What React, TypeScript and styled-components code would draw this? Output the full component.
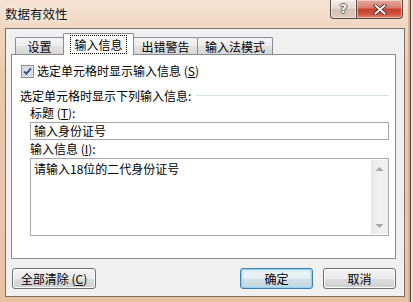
import React from "react";
import styled, { createGlobalStyle } from "styled-components";

const Global = createGlobalStyle`
  html, body { margin: 0; padding: 0; background: #ffffff; }
  body {
    font-family: "Noto Sans CJK SC", "Microsoft YaHei", sans-serif;
    font-size: 12px;
    color: #000;
  }
  * { box-sizing: border-box; }
`;

const Window = styled.div`
  width: 413px;
  height: 302px;
  display: flex;
  flex-direction: column;
  padding: 0 6px 5px 5px;
  border-right: 2px solid #e4e4e4;
  background: linear-gradient(180deg, #f5e2d2 0px, #f0d7c2 26px, #eacaac 70px, #e7c3a2 100%);
  box-shadow: inset -1px 0 0 #4e4038, inset -3px 0 0 #d9b293;
`;

const TitleBar = styled.div`
  height: 29px;
  display: flex;
  align-items: flex-start;
`;

const Title = styled.div`
  margin-top: 6px;
  font-size: 12.5px;
  line-height: 16px;
  color: #111;
  text-shadow: 0 0 5px #fff8f0, 0 0 8px #fff8f0;
`;

const CaptionButtons = styled.div`
  margin-left: auto;
  margin-right: 2px;
  display: flex;
`;

const CaptionButton = styled.div<{ $close?: boolean }>`
  width: ${(p) => (p.$close ? 46 : 27)}px;
  height: 19px;
  display: flex;
  align-items: center;
  justify-content: center;
  border: 1px solid #5e4a40;
  border-top: none;
  border-left: ${(p) => (p.$close ? "none" : "1px solid #5e4a40")};
  border-radius: ${(p) => (p.$close ? "0 0 4px 0" : "0 0 0 4px")};
  background: ${(p) =>
    p.$close
      ? "linear-gradient(180deg, #e7a79c 0%, #d98476 40%, #c8432f 52%, #cf5340 78%, #e1866c 100%)"
      : "linear-gradient(180deg, #f3ebe5 0%, #e6d9d0 45%, #d6c2b6 52%, #dccbc0 100%)"};
  box-shadow: inset 0 0 0 1px rgba(255, 255, 255, 0.45);
`;

const HelpGlyph = styled.span`
  font-family: "DejaVu Sans", sans-serif;
  font-weight: bold;
  font-size: 13px;
  line-height: 14px;
  color: #f2f2f2;
  text-shadow: -1px 0 #6a6a6a, 1px 0 #6a6a6a, 0 -1px #6a6a6a, 0 1px #6a6a6a;
`;

const Client = styled.div`
  flex: 1;
  display: flex;
  flex-direction: column;
  background: #f0f0f0;
  border: 1px solid #7c716a;
  padding: 4px 8px 7px 5px;
`;

const TabStrip = styled.div`
  position: relative;
  z-index: 1;
  height: 22px;
  margin-bottom: -1px;
  display: flex;
  align-items: flex-end;
  padding-left: 4px;
`;

const Tab = styled.div<{ $w: number; $active?: boolean }>`
  position: relative;
  z-index: ${(p) => (p.$active ? 2 : 1)};
  width: ${(p) => p.$w}px;
  height: ${(p) => (p.$active ? 22 : 17)}px;
  margin-left: -1px;
  margin-bottom: ${(p) => (p.$active ? 0 : 1)}px;
  border: 1px solid #898c95;
  border-bottom: none;
  border-radius: 2px 2px 0 0;
  display: flex;
  justify-content: center;
  align-items: ${(p) => (p.$active ? "flex-start" : "center")};
  padding-top: ${(p) => (p.$active ? 1 : 0)}px;
  font-size: 12px;
  line-height: 15px;
  background: ${(p) =>
    p.$active
      ? "#ffffff"
      : "linear-gradient(180deg, #f4f4f4 0%, #ececec 50%, #e1e1e1 51%, #d8d8d8 100%)"};
  &:first-child { margin-left: 0; }
`;

const FocusLabel = styled.span`
  border: 1px dotted #000;
  padding: 1px 3px 0;
  line-height: 16px;
`;

const Panel = styled.div`
  height: 205px;
  background: #ffffff;
  border: 1px solid #898c95;
  display: flex;
  flex-direction: column;
  padding-top: 8px;
`;

const CheckRow = styled.div`
  display: flex;
  align-items: center;
  height: 16px;
  margin-left: 9px;
  gap: 3px;
  line-height: 16px;
`;

const GroupRow = styled.div`
  display: flex;
  align-items: center;
  margin: 9px 6px 0 8px;
  height: 16px;
  line-height: 16px;
`;

const GroupLine = styled.div`
  flex: 1;
  height: 2px;
  margin-left: 5px;
  border-top: 1px solid #d5dfe5;
  border-bottom: 1px solid #ffffff;
`;

const FieldLabel = styled.div`
  margin: 1px 0 0 18px;
  height: 16px;
  line-height: 16px;
`;

const TextBox = styled.div`
  margin: 1px 0 0 18px;
  width: 359px;
  height: 18px;
  border: 1px solid #a5a7ad;
  padding-left: 3px;
  line-height: 16px;
  background: #fff;
`;

const TextArea = styled.div`
  margin: 1px 0 0 18px;
  width: 359px;
  height: 78px;
  border: 1px solid #a5a7ad;
  display: flex;
  background: #fff;
`;

const AreaText = styled.div`
  flex: 1;
  padding: 2px 0 0 3px;
  line-height: 16px;
`;

const ScrollBar = styled.div`
  width: 17px;
  margin: 1px 0 1px 0;
  display: flex;
  flex-direction: column;
  justify-content: space-between;
  background: linear-gradient(90deg, #e6e6e6 0%, #efefef 40%, #f1f1f1 100%);
`;

const ScrollArrow = styled.div`
  height: 17px;
  display: flex;
  align-items: center;
  justify-content: center;
`;

const ButtonRow = styled.div`
  margin-top: 9px;
  display: flex;
  gap: 10px;
`;

const Button = styled.div<{ $w: number; $default?: boolean }>`
  width: ${(p) => p.$w}px;
  height: 21px;
  display: flex;
  align-items: center;
  justify-content: center;
  line-height: 16px;
  padding-top: 1px;
  border-radius: 3px;
  border: 1px solid ${(p) => (p.$default ? "#3c7fb1" : "#707070")};
  background: ${(p) =>
    p.$default
      ? "linear-gradient(180deg, #eef5f9 0%, #e4eef4 50%, #d2dfe7 51%, #c6d5de 100%)"
      : "linear-gradient(180deg, #f2f2f2 0%, #ebebeb 50%, #dddddd 51%, #cfcfcf 100%)"};
  box-shadow: ${(p) =>
    p.$default
      ? "inset 0 0 0 1px #94d2f4, inset 0 0 2px 2px rgba(160, 220, 250, 0.5)"
      : "inset 0 0 0 1px #fbfbfb"};
  &:first-child { margin-left: 1px; margin-right: auto; }
`;

const CheckBox = () => (
  <svg width="13" height="13" viewBox="0 0 13 13">
    <rect x="0.5" y="0.5" width="12" height="12" fill="#f4f4f4" stroke="#8e8f8f" />
    <rect x="2" y="2" width="9" height="9" fill="#dfe3ea" stroke="#b3b7bf" strokeWidth="0.6" />
    <path d="M3.2 6.4 L5.3 8.8 L9.8 3.3" fill="none" stroke="#2f4a8a" strokeWidth="1.9" />
  </svg>
);

const CloseIcon = () => (
  <svg width="14" height="11" viewBox="0 0 14 11">
    <path d="M2.5 1.5 L11.5 9.5 M11.5 1.5 L2.5 9.5" stroke="#4a2a26" strokeWidth="3.6" strokeLinecap="square" />
    <path d="M2.5 1.5 L11.5 9.5 M11.5 1.5 L2.5 9.5" stroke="#ffffff" strokeWidth="1.9" strokeLinecap="square" />
  </svg>
);

const Arrow = ({ up }: { up?: boolean }) => (
  <svg width="9" height="6" viewBox="0 0 9 6">
    <path d={up ? "M0.5 5 L4.5 1 L8.5 5 Z" : "M0.5 1 L4.5 5 L8.5 1 Z"} fill="#a6a6a6" />
  </svg>
);

export default function App() {
  return (
    <>
      <Global />
      <Window>
        <TitleBar>
          <Title>数据有效性</Title>
          <CaptionButtons>
            <CaptionButton>
              <HelpGlyph>?</HelpGlyph>
            </CaptionButton>
            <CaptionButton $close>
              <CloseIcon />
            </CaptionButton>
          </CaptionButtons>
        </TitleBar>
        <Client>
          <TabStrip>
            <Tab $w={49}>设置</Tab>
            <Tab $w={71} $active>
              <FocusLabel>输入信息</FocusLabel>
            </Tab>
            <Tab $w={65}>出错警告</Tab>
            <Tab $w={76}>输入法模式</Tab>
          </TabStrip>
          <Panel>
            <CheckRow>
              <CheckBox />
              <span>
                选定单元格时显示输入信息 (<u>S</u>)
              </span>
            </CheckRow>
            <GroupRow>
              <span>选定单元格时显示下列输入信息:</span>
              <GroupLine />
            </GroupRow>
            <FieldLabel>
              标题 (<u>T</u>):
            </FieldLabel>
            <TextBox>输入身份证号</TextBox>
            <FieldLabel>
              输入信息 (<u>I</u>):
            </FieldLabel>
            <TextArea>
              <AreaText>请输入18位的二代身份证号</AreaText>
              <ScrollBar>
                <ScrollArrow>
                  <Arrow up />
                </ScrollArrow>
                <ScrollArrow>
                  <Arrow />
                </ScrollArrow>
              </ScrollBar>
            </TextArea>
          </Panel>
          <ButtonRow>
            <Button $w={84}>
              全部清除 (<u>C</u>)
            </Button>
            <Button $w={73} $default>
              确定
            </Button>
            <Button $w={73}>取消</Button>
          </ButtonRow>
        </Client>
      </Window>
    </>
  );
}
